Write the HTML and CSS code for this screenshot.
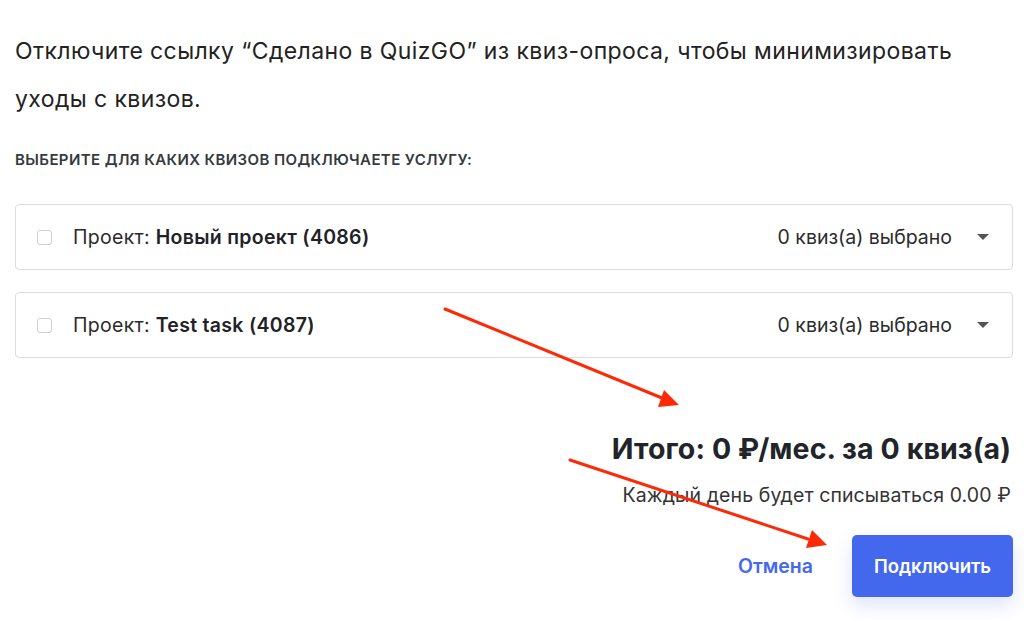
FILE: index.html
```html
<!DOCTYPE html>
<html lang="ru">
<head>
<meta charset="utf-8">
<link rel="stylesheet" href="styles.css">
</head>
<body>
<div class="page">
  <p class="intro">Отключите ссылку “Сделано в QuizGO” из квиз-опроса, чтобы минимизировать уходы с квизов.</p>
  <div class="label">Выберите для каких квизов подключаете услугу:</div>
  <div class="projects">
    <div class="project">
      <span class="check"></span>
      <span class="name">Проект: <b>Новый проект (4086)</b></span>
      <span class="count">0 квиз(а) выбрано</span>
      <span class="caret"></span>
    </div>
    <div class="project">
      <span class="check"></span>
      <span class="name">Проект: <b>Test task (4087)</b></span>
      <span class="count">0 квиз(а) выбрано</span>
      <span class="caret"></span>
    </div>
  </div>
  <div class="summary">
    <div class="total">Итого: 0 ₽/мес. за 0 квиз(а)</div>
    <div class="daily">Каждый день будет списываться 0.00 ₽</div>
  </div>
  <div class="actions">
    <button class="cancel">Отмена</button>
    <button class="submit">Подключить</button>
  </div>
</div>
<svg class="arrows" width="1024" height="620" viewBox="0 0 1024 620">
  <g fill="#fd2a08" stroke="#fd2a08">
    <line x1="445" y1="309" x2="662" y2="398" stroke-width="3" stroke-linecap="round"/>
    <polygon points="679,405 658,407 664,390" stroke="none"/>
    <line x1="570" y1="460" x2="808" y2="539" stroke-width="3" stroke-linecap="round"/>
    <polygon points="827,545 806,548 812,530" stroke="none"/>
  </g>
</svg>
</body>
</html>
```

FILE: styles.css
```css
* { box-sizing: border-box; }
html, body { margin: 0; padding: 0; background: #fff; }
body {
  font-family: Inter, "Noto Sans", "Liberation Sans", sans-serif;
  color: #212529;
  width: 1024px;
  height: 620px;
  overflow: hidden;
  position: relative;
}
.page {
  padding: 27px 11px 0 15px;
}
.intro {
  margin: 0;
  font-size: 23px;
  letter-spacing: 0.4px;
  line-height: 48px;
  color: #222;
  max-width: 990px;
}
.label {
  margin-top: 28px;
  font-size: 15px;
  font-weight: 600;
  text-transform: uppercase;
  color: #343a40;
  letter-spacing: 0.4px;
  line-height: 18px;
}
.projects {
  margin-top: 35px;
  display: flex;
  flex-direction: column;
  gap: 22px;
}
.project {
  height: 66px;
  border: 1px solid #dcdcdc;
  border-radius: 4px;
  display: flex;
  align-items: center;
  padding: 0 23px 0 21px;
  font-size: 19.5px;
  color: #222;
}
.check {
  width: 15px;
  height: 15px;
  border: 1px solid #cfcfcf;
  border-radius: 3px;
  margin-right: 21px;
  flex: none;
}
.name { color: #2b2b2b; letter-spacing: 0.3px; }
.name b { font-weight: 600; color: #1f2328; }
.count {
  margin-left: auto;
  color: #2b2b2b;
}
.caret {
  width: 0; height: 0;
  border-left: 6px solid transparent;
  border-right: 6px solid transparent;
  border-top: 6px solid #555;
  margin-left: 25px;
}
.summary {
  margin-top: 73px;
  text-align: right;
  padding-right: 2px;
}
.total {
  font-size: 28.5px;
  font-weight: 700;
  color: #212529;
  line-height: 36px;
  letter-spacing: 0.1px;
}
.daily {
  margin-top: 16px;
  font-size: 19.5px;
  color: #333;
  line-height: 24px;
  letter-spacing: 0.1px;
}
.actions {
  margin-top: 28px;
  display: flex;
  justify-content: flex-end;
  align-items: center;
  gap: 39px;
}
button {
  font-family: inherit;
  border: none;
  cursor: pointer;
}
.cancel {
  background: none;
  color: #4468ee;
  font-size: 19.5px;
  font-weight: 600;
  padding: 0;
}
.submit {
  width: 161px;
  height: 62px;
  background: #4368ee;
  color: #fff;
  font-size: 18.5px;
  font-weight: 600;
  border-radius: 5px;
  box-shadow: 0 8px 18px rgba(67, 104, 238, 0.18);
}
.arrows {
  position: absolute;
  left: 0;
  top: 0;
  pointer-events: none;
}
```
